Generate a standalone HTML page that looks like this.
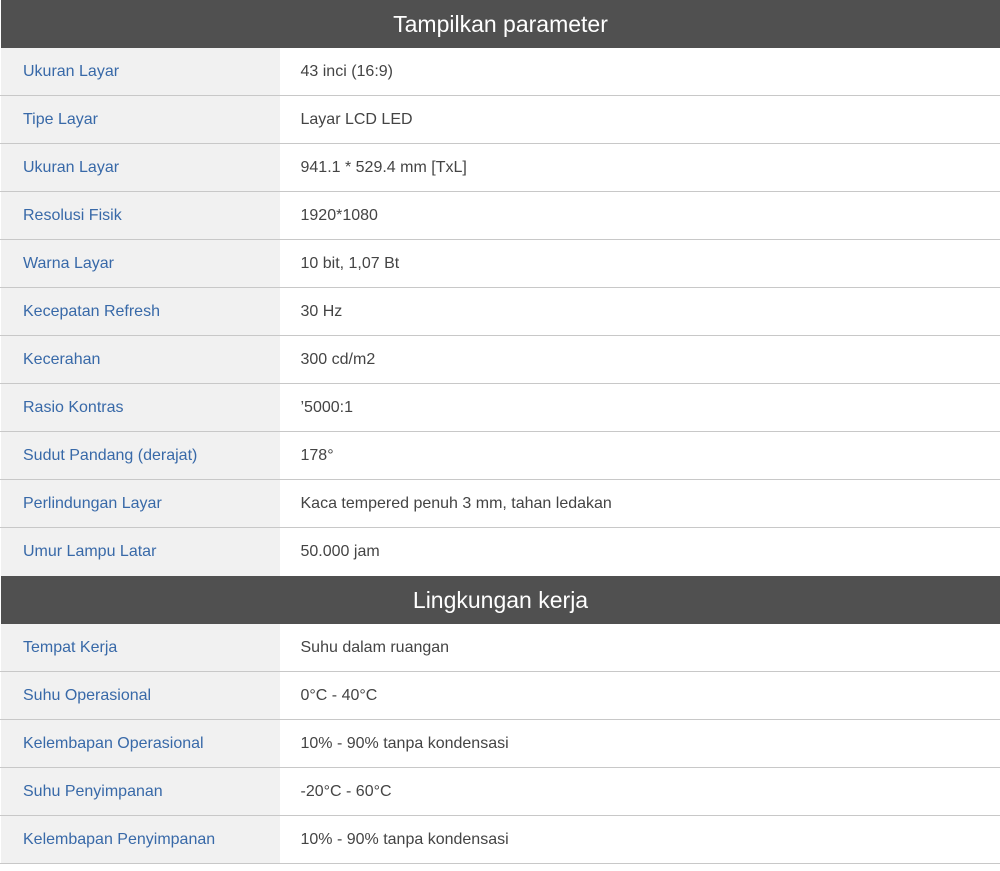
<!DOCTYPE html>
<html><head><meta charset="utf-8"><style>
body{margin:0;background:#fff;font-family:"Liberation Sans",sans-serif;}
table{border-collapse:collapse;width:1000px;table-layout:fixed;}
th{background:#505050;color:#fff;font-weight:normal;font-size:23px;height:48px;padding:0;}
td{height:47px;border-bottom:1px solid #c8c8c8;font-size:16px;padding:0 0 0 22px;}
td.l{background:#f1f1f1;color:#3869a8;border-left:1px solid #fff;}
td.r{color:#444;padding-left:21px;}
</style></head><body>
<table>
<colgroup><col style="width:279px"><col style="width:721px"></colgroup>
<tr><th colspan="2">Tampilkan parameter</th></tr>
<tr><td class="l">Ukuran Layar</td><td class="r">43 inci (16:9)</td></tr>
<tr><td class="l">Tipe Layar</td><td class="r">Layar LCD LED</td></tr>
<tr><td class="l">Ukuran Layar</td><td class="r">941.1 * 529.4 mm [TxL]</td></tr>
<tr><td class="l">Resolusi Fisik</td><td class="r">1920*1080</td></tr>
<tr><td class="l">Warna Layar</td><td class="r">10 bit, 1,07 Bt</td></tr>
<tr><td class="l">Kecepatan Refresh</td><td class="r">30 Hz</td></tr>
<tr><td class="l">Kecerahan</td><td class="r">300 cd/m2</td></tr>
<tr><td class="l">Rasio Kontras</td><td class="r">’5000:1</td></tr>
<tr><td class="l">Sudut Pandang (derajat)</td><td class="r">178°</td></tr>
<tr><td class="l">Perlindungan Layar</td><td class="r">Kaca tempered penuh 3 mm, tahan ledakan</td></tr>
<tr><td class="l" style="border-bottom:none;height:48px">Umur Lampu Latar</td><td class="r" style="border-bottom:none;height:48px">50.000 jam</td></tr>
<tr><th colspan="2">Lingkungan kerja</th></tr>
<tr><td class="l">Tempat Kerja</td><td class="r">Suhu dalam ruangan</td></tr>
<tr><td class="l">Suhu Operasional</td><td class="r">0°C - 40°C</td></tr>
<tr><td class="l">Kelembapan Operasional</td><td class="r">10% - 90% tanpa kondensasi</td></tr>
<tr><td class="l">Suhu Penyimpanan</td><td class="r">-20°C - 60°C</td></tr>
<tr><td class="l">Kelembapan Penyimpanan</td><td class="r">10% - 90% tanpa kondensasi</td></tr>
</table>
</body></html>
